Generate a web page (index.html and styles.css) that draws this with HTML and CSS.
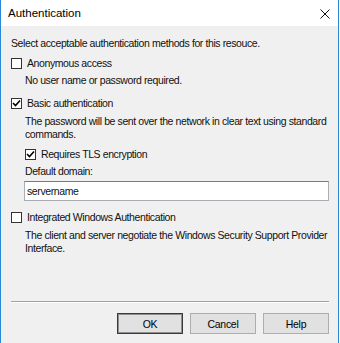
FILE: index.html
```html
<!DOCTYPE html>
<html>
<head>
<meta charset="utf-8">
<link rel="stylesheet" href="styles.css">
</head>
<body>
<div class="window">
  <div class="titlebar">
    <span class="title">Authentication</span>
    <svg class="close" width="10" height="10" viewBox="0 0 10 10"><path d="M0.5 0.5 L9.5 9.5 M9.5 0.5 L0.5 9.5" stroke="#111" stroke-width="1" fill="none"/></svg>
  </div>
  <div class="content">
    <div class="main">
      <p class="intro">Select acceptable authentication methods for this resouce.</p>
      <label class="check r-anon"><span class="box"></span>Anonymous access</label>
      <p class="desc d-anon">No user name or password required.</p>
      <label class="check r-basic"><span class="box"><svg width="9" height="9" viewBox="0 0 9 9"><path d="M1 4 L3.5 6.5 L8 1.5" stroke="#000" stroke-width="1.6" fill="none"/></svg></span>Basic authentication</label>
      <p class="desc d-basic">The password will be sent over the network in clear text using standard commands.</p>
      <label class="check sub r-tls"><span class="box"><svg width="9" height="9" viewBox="0 0 9 9"><path d="M1 4 L3.5 6.5 L8 1.5" stroke="#000" stroke-width="1.6" fill="none"/></svg></span>Requires TLS encryption</label>
      <p class="desc d-domain">Default domain:</p>
      <div class="input">servername</div>
      <label class="check r-int"><span class="box"></span>Integrated Windows Authentication</label>
      <p class="desc d-int">The client and server negotiate the Windows Security Support Provider Interface.</p>
    </div>
    <div class="footer">
      <div class="sep"></div>
      <div class="buttons">
        <button class="btn default">OK</button>
        <button class="btn">Cancel</button>
        <button class="btn">Help</button>
      </div>
    </div>
  </div>
</div>
</body>
</html>
```
FILE: styles.css
```css
html, body {
  margin: 0;
  padding: 0;
  background: #ffffff;
}
body {
  font-family: "Liberation Sans", Arial, sans-serif;
  font-size: 10.5px;
  letter-spacing: -0.4px;
  color: #111;
}
.window {
  width: 337px;
  height: 343px;
  border-left: 1px solid #2b88d8;
  border-right: 1px solid #2b88d8;
  display: flex;
  flex-direction: column;
  background: #f0f0f0;
}
.titlebar {
  height: 26px;
  background: #ffffff;
  display: flex;
  align-items: center;
  justify-content: space-between;
  padding: 0 8px 0 7px;
  flex: none;
}
.title {
  font-size: 11.5px;
  letter-spacing: 0;
  color: #000;
}
.close {
  display: block;
  margin-top: 1px;
}
.content {
  flex: 1;
  display: flex;
  flex-direction: column;
  padding: 0 9px 0 10px;
}
.main {
  flex: 1;
  display: flex;
  flex-direction: column;
}
p {
  margin: 0;
  line-height: 13px;
}
.intro {
  margin-top: 11px;
}
.check {
  display: flex;
  align-items: center;
  line-height: 13px;
  height: 13px;
}
.box {
  width: 9px;
  height: 9px;
  border: 1px solid #333;
  background: #fff;
  margin-right: 5px;
  display: flex;
  align-items: center;
  justify-content: center;
  flex: none;
}
.box svg {
  display: block;
}
.sub {
  margin-left: 14px;
}
.desc {
  margin-left: 14px;
}
.r-anon { margin-top: 7px; }
.d-anon { margin-top: 4px; }
.r-basic { margin-top: 10px; }
.d-basic { margin-top: 5px; }
.r-tls { margin-top: 7px; }
.d-domain { margin-top: 4px; }
.input {
  margin: 3px 0 0 13px;
  height: 18px;
  border: 1px solid #abadb3;
  border-top-color: #7a7a7a;
  background: #fff;
  padding: 0 2px;
  line-height: 18px;
}
.r-int { margin-top: 10px; }
.d-int { margin-top: 5px; }
.footer {
  flex: none;
  padding-bottom: 9px;
}
.sep {
  height: 0;
  border-top: 1px solid #a0a0a0;
  border-bottom: 1px solid #ffffff;
  margin-bottom: 10px;
}
.buttons {
  display: flex;
  justify-content: flex-end;
  gap: 7px;
}
.btn {
  width: 66px;
  height: 21px;
  font-family: "Liberation Sans", Arial, sans-serif;
  font-size: 10.5px;
  letter-spacing: -0.3px;
  color: #000;
  background: #e1e1e1;
  border: 1px solid #adadad;
  padding: 0;
  margin: 0;
}
.btn.default {
  border: 1px solid #3a3a3a;
  box-shadow: inset 0 0 0 1px #8f8f8f;
}
```
